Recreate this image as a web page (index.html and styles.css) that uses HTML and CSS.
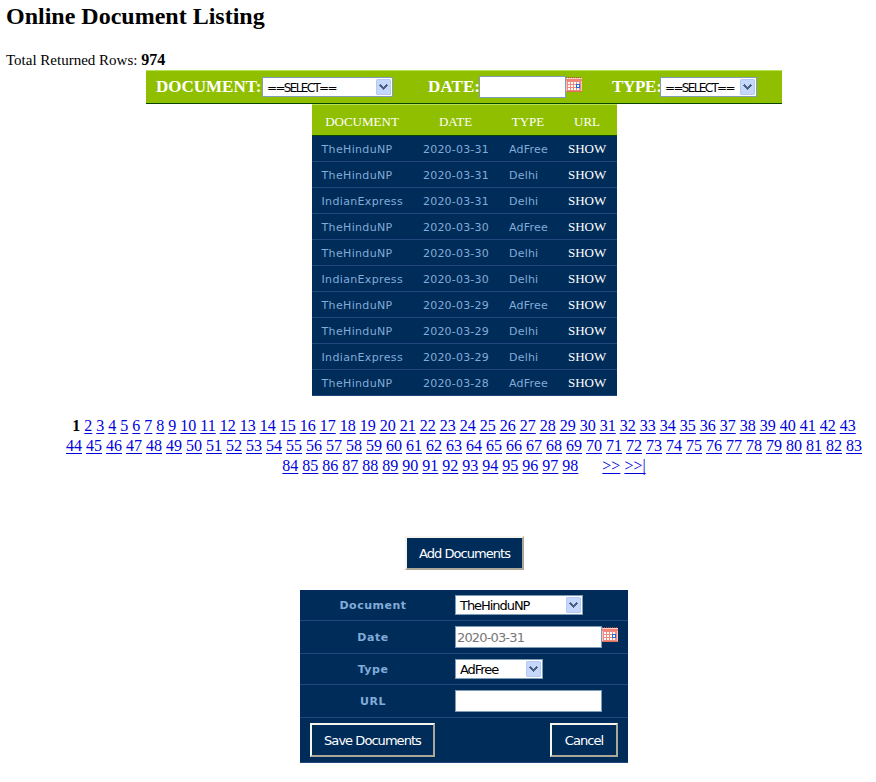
FILE: index.html
```
<!DOCTYPE html>
<html lang="en">
<head>
<meta charset="utf-8">
<title>Online Document Listing</title>
<link rel="stylesheet" href="styles.css">
</head>
<body>
<svg class="defs" width="0" height="0">
  <symbol id="cal" viewBox="0 0 16 15" shape-rendering="crispEdges">
    <path fill="#f9c4ba" d="M0 1h16v14H0z"/><path fill="#f08478" d="M0 2h16v2H0z"/>
    <path stroke="#b04a40" stroke-dasharray="1 1" d="M0 .5h16"/>
    <path stroke="#ffd9d3" stroke-dasharray="1 1" d="M1 1.500h15"/>
    <path fill="#f08a7e" d="M1 4h14v10H1z"/>
    <path fill="#fff" d="M2 5h2v2H2zm3 0h2v2H5zm3 0h2v2H8zm3 0h2v2h-2zM2 8h2v2H2zm3 0h2v2H5zm3 0h2v2H8zM2 11h2v2H2zm3 0h2v2H5zm3 0h2v2H8zm3 0h2v2h-2z"/>
    <path fill="#2369dc" d="M10 7h4v4h-4z"/><path fill="#fff" d="M11 8h2v2h-2z"/>
    <path fill="#d9735f" d="M0 14h16v1H0z"/>
  </symbol>
  <symbol id="arrow" viewBox="0 0 15 16">
    <rect width="15" height="16" rx="1.500" fill="#b5c9f4"/><rect x="1" y="1" width="13" height="14" rx="1" fill="#c6d7fc"/>
    <path fill="#4d6185" shape-rendering="crispEdges" d="M3 6h1V5h1v1h1v1h1v1h1V7h1V6h1V5h1v1h1v1h-1v1h-1v1H9v1H8v1H7v-1H6V9H5V8H4V7H3z"/>
  </symbol>
</svg>
<h2>Online Document Listing</h2>
<p class="total">Total Returned Rows: <b>974</b></p>
<main>
  <div class="filters">
    <div class="filter f-doc"><b>DOCUMENT:</b><span class="select w131"><span class="tight">==SELECT==</span><svg><use href="#arrow"/></svg></span></div>
    <div class="filter f-date"><b>DATE:</b><input class="w87" aria-label="Date filter"><svg class="cal"><use href="#cal"/></svg></div>
    <div class="filter"><b>TYPE:</b><span class="select w97"><span class="tight">==SELECT==</span><svg><use href="#arrow"/></svg></span></div>
  </div>
  <table class="list">
    <colgroup><col class="c1"><col class="c2"><col class="c3"><col class="c3"></colgroup>
    <thead><tr><th>DOCUMENT</th><th>DATE</th><th>TYPE</th><th>URL</th></tr></thead>
    <tbody id="rows"></tbody>
  </table>
  <nav id="pages"></nav>
  <button class="add">Add Documents</button>
  <form class="form">
    <div class="row r1"><label>Document</label><span class="select w128"><span class="opt">TheHinduNP</span><svg><use href="#arrow"/></svg></span></div>
    <div class="row r2"><label>Date</label><input class="w147" value="2020-03-31" aria-label="Date"><svg class="cal"><use href="#cal"/></svg></div>
    <div class="row r3"><label>Type</label><span class="select w88"><span class="opt">AdFree</span><svg><use href="#arrow"/></svg></span></div>
    <div class="row r4"><label>URL</label><input class="w147" aria-label="URL"></div>
    <div class="row r5"><button type="button" class="save">Save Documents</button><button type="button" class="cancel">Cancel</button></div>
  </form>
</main>
<script src="app.js"></script>
</body>
</html>
```
FILE: app.js
```
const H = "TheHinduNP", I = "IndianExpress", A = "AdFree", D = "Delhi";
const data = [[H,"31",A],[H,"31",D],[I,"31",D],[H,"30",A],[H,"30",D],[I,"30",D],[H,"29",A],[H,"29",D],[I,"29",D],[H,"28",A]];
document.getElementById("rows").innerHTML = data.map(([n, d, t]) =>
  `<tr><td class="name">${n}</td><td>2020-03-${d}</td><td>${t}</td><td class="show">SHOW</td></tr>`).join("");
let out = "<b>1</b> ";
for (let i = 2; i <= 98; i++) {
  out += `<a href="#">${i}</a>` + (i === 43 || i === 83 ? "<br>" : " ");
}
out += '&nbsp;&nbsp;&nbsp;&nbsp; <a class="jump" href="#">&gt;&gt;</a> <a class="jump" href="#">&gt;&gt;|</a>';
document.getElementById("pages").innerHTML = out;
```
FILE: styles.css
```
* { box-sizing: border-box; }
body { margin: 0; background: #fff; color: #000; font: 16px/20px "Liberation Serif", serif; overflow: hidden; }
.defs { position: absolute; }
h2 { margin: 0 0 0 6px; padding-top: 3px; height: 50px; font-size: 24px; line-height: 27px; letter-spacing: 0; }
.total { margin: 0 0 0 6px; height: 20px; font-size: 15px; }
.total b { font-size: 16px; letter-spacing: 0; }
main { margin-left: 52px; width: 824px; display: flex; flex-direction: column; align-items: center; }
.filters { width: 636px; height: 34px; display: flex; padding-left: 10px; background: #90bf00; border-top: 1px solid #b8e357; border-bottom: 1px solid #064600; color: #fff; }
.filter { display: flex; align-items: center; }
.filter b { font-size: 17px; white-space: nowrap; width: 106px; letter-spacing: 0; }
.f-doc { width: 272px; }
.f-date { width: 184px; }
.f-date b { width: 51px; letter-spacing: 0.1px; }
.filter:last-child b { width: 48px; letter-spacing: -0.3px; }
.select { display: flex; align-items: center; justify-content: space-between; height: 20px; padding: 0 1px 0 4px; background: #fff; border: 1px solid #7f9db9; color: #000; font: 13px/18px "DejaVu Sans", sans-serif; white-space: nowrap; }
.select > span { padding-top: 1px; }
.select svg { width: 15px; height: 16px; flex: none; }
.tight { font-size: 12px; letter-spacing: -1.65px; }
.opt { letter-spacing: -1.05px; }
input { height: 22px; padding: 1px; background: #fff; border: 1px solid #7f9db9; font: 13px "DejaVu Sans", sans-serif; color: #777; letter-spacing: -0.85px; border-radius: 0; }
.w131 { width: 131px; }
.w128 { width: 128px; }
.w97 { width: 97px; }
.w88 { width: 88px; }
.w87 { width: 87px; }
.w147 { width: 147px; }
.cal { width: 16px; height: 15px; margin-bottom: 5px; }
.list { width: 305px; table-layout: fixed; border-collapse: separate; border-spacing: 0; background: #002c5a; }
.c1 { width: 101px; }
.c2 { width: 86px; }
.c3 { width: 59px; }
.list th { height: 32px; padding: 3px 0 0; background: #90bf00; border-top: 1px solid #b8e357; border-bottom: 1px solid #064600; color: #fff; font-size: 13px; font-weight: 400; line-height: 16px; }
.list td { height: 26px; padding: 2px 0 0 10.5px; border-bottom: 1px solid #23477c; color: #82abd7; font: 11px/16px "DejaVu Sans", sans-serif; letter-spacing: 0.2px; white-space: nowrap; }
.list td.name { letter-spacing: 0.35px; padding-left: 10px; }
.list td.show { color: #fff; font: 13px/16px "Liberation Serif", serif; letter-spacing: 0; padding-top: 0; }
nav { margin-top: 20px; height: 120px; text-align: center; white-space: nowrap; }
a { color: #00d; text-decoration: underline; text-decoration-thickness: 1px; text-underline-offset: 2px; text-decoration-skip-ink: none; }
button { background: #002c5a; color: #fff; border: 2px solid; border-color: #f5f5ee #aca899 #aca899 #f5f5ee; font: 13px/16px "DejaVu Sans", sans-serif; letter-spacing: -0.95px; padding: 1px 0 0; border-radius: 0; white-space: nowrap; }
.add { width: 119px; height: 34px; margin-left: 1px; flex: none; }
.form { margin-top: 20px; width: 328px; background: #002c5a; }
.row { display: flex; align-items: center; border-bottom: 1px solid #23477c; }
.row label { width: 155px; padding: 1px 9px 0 0; text-align: center; color: #82abd7; font: bold 11px/16px "DejaVu Sans", sans-serif; letter-spacing: 0.5px; }
.r1 { height: 31px; }
.r2 { height: 33px; }
.r3 { height: 31px; }
.r4 { height: 33px; }
.r5 { height: 45px; justify-content: space-between; padding: 0 10px; }
.save { width: 125px; height: 34px; }
.cancel { width: 68px; height: 34px; }
```
